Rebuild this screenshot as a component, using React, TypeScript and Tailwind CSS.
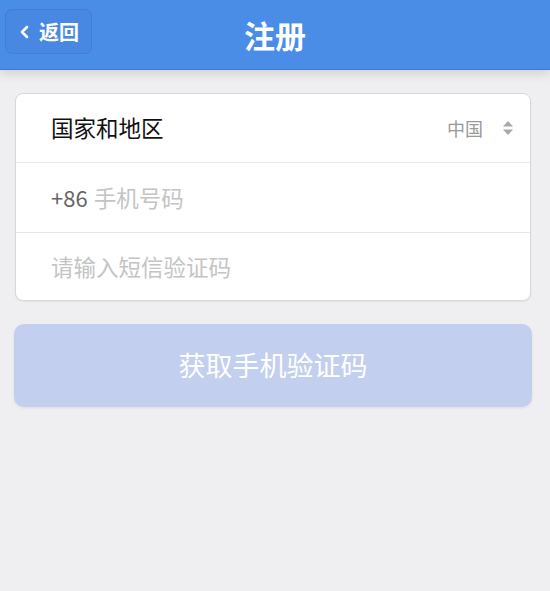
import React from "react";

export default function App() {
  return (
    <div
      className="w-[550px] h-[591px] bg-[#efeff2] overflow-hidden"
      style={{ fontFamily: '"Noto Sans CJK SC", "Noto Sans", sans-serif' }}
    >
      <div className="relative h-[70px] bg-[#4a8de6] border-b border-[#3d7bd0] flex items-center justify-center shadow-[0_4px_10px_rgba(0,0,0,0.12)]">
        <div className="absolute left-[5px] top-[9px] w-[87px] h-[45px] rounded-[7px] border border-[#3f7fd6] bg-[#4888e3] flex items-center pl-[13px] gap-[9px]">
          <svg width="11" height="16" viewBox="0 0 11 16">
            <path d="M8 3 L3 8 L8 13" fill="none" stroke="white" strokeWidth="2.6" strokeLinecap="round" strokeLinejoin="round" />
          </svg>
          <span className="text-white text-[20px] font-bold leading-none">返回</span>
        </div>
        <span className="text-white text-[31px] font-bold leading-none">注册</span>
      </div>

      <div className="mx-[15px] mt-[23px] w-[516px] bg-white rounded-[8px] border border-[#d8d8dc] shadow-[0_1px_2px_rgba(0,0,0,0.05)]">
        <div className="h-[69px] flex items-center pl-[35px] pr-[16px] border-b border-[#e6e6e8]">
          <span className="text-[22.5px] text-[#111] flex-1">国家和地区</span>
          <span className="text-[18px] text-[#9a9a9a] mr-[19px]">中国</span>
          <svg width="12" height="16" viewBox="0 0 12 16">
            <path d="M6 1 L11 6.5 L1 6.5 Z" fill="#a8a8a8" />
            <path d="M6 15 L11 9.5 L1 9.5 Z" fill="#a8a8a8" />
          </svg>
        </div>
        <div className="h-[70px] flex items-center pl-[35px] border-b border-[#e6e6e8]">
          <span className="text-[22px] text-[#666] mr-[6px]">+86</span>
          <span className="text-[22.5px] text-[#c4c4c4]">手机号码</span>
        </div>
        <div className="h-[67px] flex items-center pl-[35px]">
          <span className="text-[22.5px] text-[#c4c4c4]">请输入短信验证码</span>
        </div>
      </div>

      <div className="mx-[14px] mt-[23px] w-[518px] h-[83px] rounded-[10px] bg-[#c3cfee] flex items-center justify-center shadow-[0_1px_3px_rgba(0,0,0,0.08)]">
        <span className="text-white text-[27px]">获取手机验证码</span>
      </div>
    </div>
  );
}
